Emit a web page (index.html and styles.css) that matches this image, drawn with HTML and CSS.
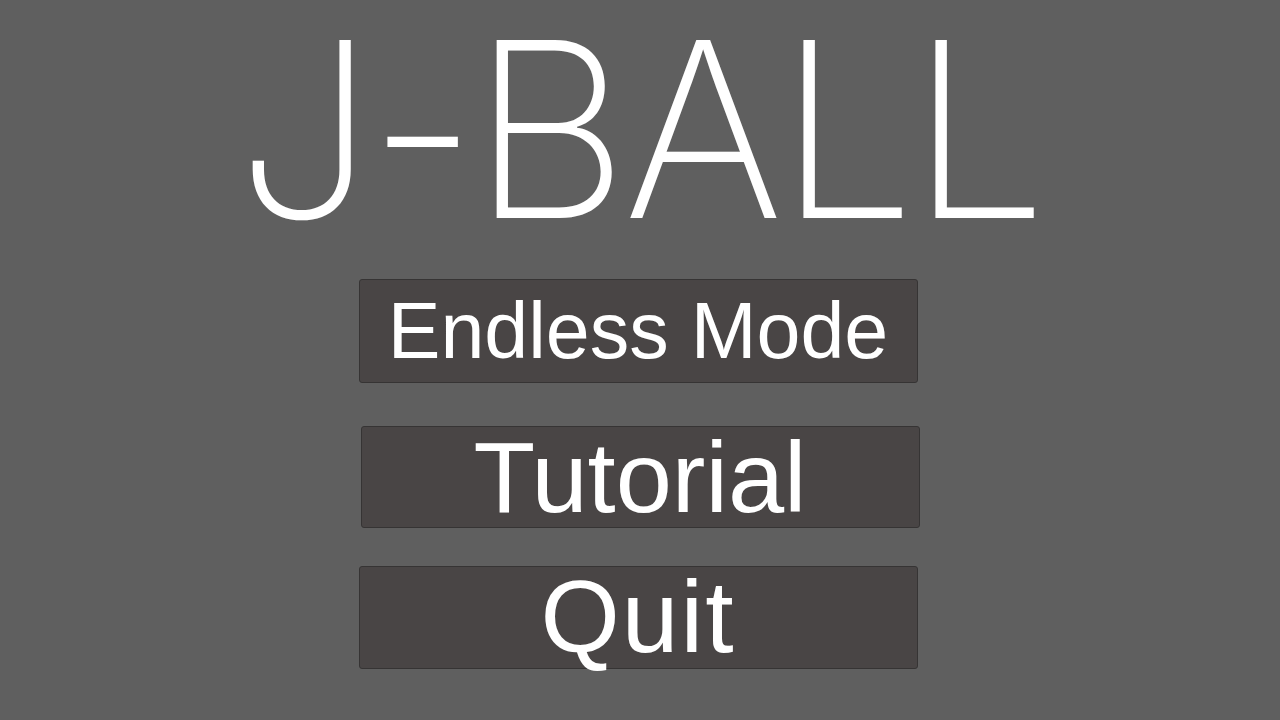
FILE: index.html
```html
<!DOCTYPE html>
<html>
<head>
<meta charset="utf-8">
<link rel="stylesheet" href="styles.css">
</head>
<body>
<main class="menu">
  <h1 class="title">J-BALL</h1>
  <div class="buttons">
    <button class="btn btn-endless">Endless Mode</button>
    <button class="btn btn-tutorial">Tutorial</button>
    <button class="btn btn-quit">Quit</button>
  </div>
</main>
</body>
</html>
```
FILE: styles.css
```css
html, body {
  margin: 0;
  padding: 0;
  background: #5f5f5f;
  width: 1280px;
  height: 720px;
  overflow: hidden;
}
.menu {
  display: flex;
  flex-direction: column;
  align-items: center;
  padding-right: 4px;
}
.title {
  margin: -19px 0 0 2px;
  height: 298px;
  font-family: Inter, "Liberation Sans", sans-serif;
  font-weight: 170;
  font-size: 245px;
  line-height: normal;
  color: #ffffff;
  letter-spacing: -6px;
  white-space: nowrap;
}
.buttons {
  display: flex;
  flex-direction: column;
  align-items: center;
}
.btn {
  width: 559px;
  background: #494545;
  border: 1px solid #363434;
  border-radius: 3px;
  color: #ffffff;
  font-family: "Liberation Sans", Arial, sans-serif;
  padding: 0;
  display: flex;
  align-items: center;
  justify-content: center;
}
.btn-endless {
  height: 104px;
  font-size: 79px;
}
.btn-tutorial {
  height: 102px;
  font-size: 101px;
  margin-top: 43px;
  position: relative;
  left: 2px;
}
.btn-quit {
  height: 103px;
  font-size: 102px;
  letter-spacing: 2px;
  margin-top: 38px;
}
```
